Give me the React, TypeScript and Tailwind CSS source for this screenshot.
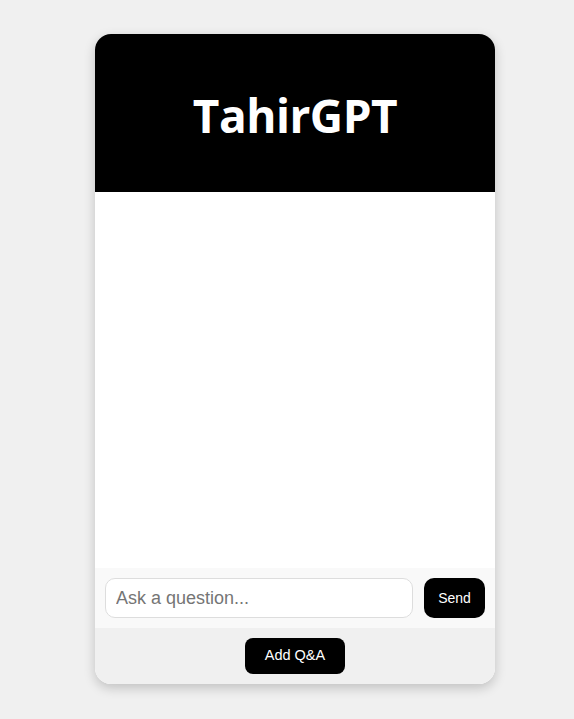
import React, { useState } from 'react';

const App: React.FC = () => {
  const [question, setQuestion] = useState('');

  return (
    <div className="min-h-screen bg-[#f0f0f0] flex justify-center pt-[34px] pl-4 font-['Liberation_Sans',Arial,sans-serif]">
      <div className="w-[400px] h-[650px] rounded-2xl overflow-hidden bg-white shadow-[0_4px_12px_rgba(0,0,0,0.2)] flex flex-col">
        <div className="h-[158px] bg-black flex items-center justify-center">
          <h1 className="text-white text-[46px] font-bold font-['Open_Sans',sans-serif] tracking-[-0.5px] mt-[4px]">TahirGPT</h1>
        </div>

        {/* chat messages */}
        <div className="flex-1 bg-white"></div>

        <div className="h-[60px] bg-[#f9f9f9] flex items-center gap-[11px] px-[10px]">
          <input
            value={question}
            onChange={(e) => setQuestion(e.target.value)}
            placeholder="Ask a question..."
            className="flex-1 h-[40px] rounded-[10px] border border-[#ddd] bg-white px-[10px] text-[18px] outline-none placeholder:text-[#757575]"
          />
          <button className="w-[61px] h-[40px] rounded-[10px] bg-black text-white text-[14px]">Send</button>
        </div>

        <div className="h-[56px] bg-[#f0f0f0] flex items-start justify-center pt-[10px]">
          <button className="w-[100px] h-[36px] rounded-[8px] bg-black text-white text-[14.5px]">Add Q&amp;A</button>
        </div>
      </div>
    </div>
  );
};

export default App;
